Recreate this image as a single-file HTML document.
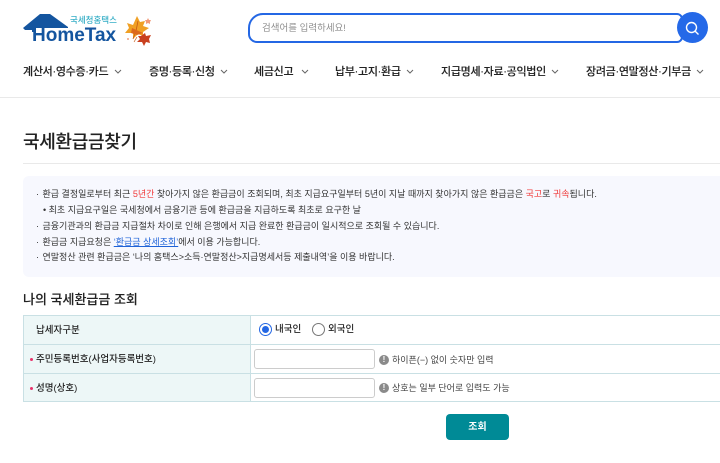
<!DOCTYPE html>
<html lang="ko"><head><meta charset="utf-8"><title>국세환급금찾기</title>
<style>
html,body{margin:0;padding:0;background:#fff;width:720px;height:463px;overflow:hidden}
body{position:relative;font-family:"Liberation Sans","Noto Sans CJK KR",sans-serif;color:#222}
.a{position:absolute;white-space:nowrap}
.nav{top:64px;font-size:11px;letter-spacing:-.3px;line-height:17px;font-weight:500;color:#222;-webkit-text-stroke:.1px #222}
.chev{position:absolute;top:69px}
.info{left:0;font-size:9px;line-height:14px;color:#333}
.th{font-size:9.5px;line-height:14px;color:#222;font-weight:500}
.r{color:#f03a3a}
.inp{position:absolute;left:254px;width:119px;height:18px;border:1px solid #ccc;border-radius:3px;background:#fff}
.ic{position:absolute;left:379px;width:10px;height:10px;border-radius:50%;background:#8a8a8a;color:#fff;font:bold 8px/10px "Liberation Sans",sans-serif;text-align:center}
.hint{left:392px;font-size:9px;line-height:14px;color:#444}
.star{left:30px;width:3px;height:3px;border-radius:50%;background:#e8336b;position:absolute}
</style></head><body>

<svg class="a" style="left:22px;top:12px" width="60" height="24" viewBox="0 0 60 24">
<path d="M1 16 L18 2 L28 2 L46 15 L46 16 L12 16 L12 20 L10 20 L10 18 L3 18 Z" fill="#14559f"/>
</svg>
<div class="a" style="left:32px;top:24px;font:bold 19px/24px 'Liberation Sans',sans-serif;color:#14559f">HomeTax</div>
<div class="a" style="left:70px;top:14px;font-size:8.5px;line-height:12px;font-weight:500;color:#35aec6">국세청홈택스</div>

<svg class="a" style="left:124px;top:15px" width="28" height="32" viewBox="0 0 28 32">
<path d="M13 1 L16 7 L21 6 L19 11 L25 13 L19 17 L19 21 L14 19 L9 24 L9 18 L1 18 L5 13 L3 8 L9 10 Z" fill="#f0a024"/>
<path d="M14 6 L12 16 L9 24" stroke="#c65a12" stroke-width=".8" fill="none"/>
<path d="M8 13 L19 18 L13 20 L7 18 Z" fill="#dc6a1c"/>
<path d="M17 21 L21 18 L22 21 L27 20 L25 24 L26 28 L22 27 L20 31 L18 27 L13 27 L16 24 L14 21 Z" fill="#c9401f"/>
<path d="M24 3 L25 5 L27 5 L26 7 L26 9 L24 8 L22 9 L22 7 L21 5 L23 5 Z" fill="#f19a78"/>
<circle cx="4" cy="24" r="1" fill="#f0a080"/>
<path d="M10 27 L13 22" stroke="#c65a12" stroke-width=".7"/>
</svg>

<div class="a" style="left:248px;top:13px;width:431px;height:26px;border:2px solid #2467e4;border-radius:15px 6px 6px 9px;background:#fff"></div>
<div class="a" style="left:262px;top:22px;font-size:9.5px;line-height:14px;color:#8f8f8f">검색어를 입력하세요!</div>
<div class="a" style="left:677px;top:12px;width:31px;height:31px;border-radius:50%;background:#2569e8"></div>
<svg class="a" style="left:684px;top:20px" width="17" height="17" viewBox="0 0 17 17"><circle cx="7.5" cy="7.5" r="5" fill="none" stroke="#fff" stroke-width="1.4"/><path d="M11.2 11.2 L14.5 14.5" stroke="#fff" stroke-width="1.4"/></svg>

<div class="a nav" style="left:23px">계산서·영수증·카드</div>
<div class="a nav" style="left:149px">증명·등록·신청</div>
<div class="a nav" style="left:254px">세금신고</div>
<div class="a nav" style="left:335px">납부·고지·환급</div>
<div class="a nav" style="left:441px">지급명세·자료·공익법인</div>
<div class="a nav" style="left:586px">장려금·연말정산·기부금</div>
<svg class="chev" style="left:114px" width="8" height="6" viewBox="0 0 8 6"><path d="M1 1 L4 4 L7 1" fill="none" stroke="#666" stroke-width="1"/></svg>
<svg class="chev" style="left:220px" width="8" height="6" viewBox="0 0 8 6"><path d="M1 1 L4 4 L7 1" fill="none" stroke="#666" stroke-width="1"/></svg>
<svg class="chev" style="left:301px" width="8" height="6" viewBox="0 0 8 6"><path d="M1 1 L4 4 L7 1" fill="none" stroke="#666" stroke-width="1"/></svg>
<svg class="chev" style="left:406px" width="8" height="6" viewBox="0 0 8 6"><path d="M1 1 L4 4 L7 1" fill="none" stroke="#666" stroke-width="1"/></svg>
<svg class="chev" style="left:551px" width="8" height="6" viewBox="0 0 8 6"><path d="M1 1 L4 4 L7 1" fill="none" stroke="#666" stroke-width="1"/></svg>
<svg class="chev" style="left:696px" width="8" height="6" viewBox="0 0 8 6"><path d="M1 1 L4 4 L7 1" fill="none" stroke="#666" stroke-width="1"/></svg>

<div class="a" style="left:0;top:97px;width:720px;height:1px;background:#e9e9e9"></div>

<div class="a" style="left:23px;top:129px;font-size:18px;letter-spacing:-.3px;line-height:26px;font-weight:500;color:#222;-webkit-text-stroke:.1px #222">국세환급금찾기</div>
<div class="a" style="left:23px;top:163px;width:697px;height:1px;background:#e9e9e9"></div>

<div class="a" style="left:23px;top:176px;width:697px;height:101px;background:#f7f8fe;border-radius:6px 0 0 6px"></div>
<div class="a info" style="left:36px;top:187px">·&nbsp;<span style="margin-left:1px">환급 결정일로부터 최근 <span class="r">5년간</span> 찾아가지 않은 환급금이 조회되며, 최초 지급요구일부터 5년이 지날 때까지 찾아가지 않은 환급금은 <span class="r">국고</span>로 <span class="r">귀속</span>됩니다.</span></div>
<div class="a info" style="left:43px;top:203px">•&nbsp;최초 지급요구일은 국세청에서 금융기관 등에 환급금을 지급하도록 최초로 요구한 날</div>
<div class="a info" style="left:36px;top:219px">·&nbsp;<span style="margin-left:1px">금융기관과의 환급금 지급절차 차이로 인해 은행에서 지급 완료한 환급금이 일시적으로 조회될 수 있습니다.</span></div>
<div class="a info" style="left:36px;top:235px">·&nbsp;<span style="margin-left:1px">환급금 지급요청은 <span style="color:#1f63d8;text-decoration:underline">‘환급금 상세조회’</span>에서 이용 가능합니다.</span></div>
<div class="a info" style="left:36px;top:250px">·&nbsp;<span style="margin-left:1px">연말정산 관련 환급금은 ‘나의 홈택스&gt;소득·연말정산&gt;지급명세서등 제출내역’을 이용 바랍니다.</span></div>

<div class="a" style="left:23px;top:291px;font-size:13px;line-height:18px;font-weight:500;color:#222;-webkit-text-stroke:.1px #222">나의 국세환급금 조회</div>

<div class="a" style="left:23px;top:315px;width:697px;height:87px;border-top:1px solid #c9e0e4;border-bottom:1px solid #c9e0e4;box-sizing:border-box;background:#fff"></div>
<div class="a" style="left:23px;top:316px;width:227px;height:85px;background:#edf7f7;border-left:1px solid #c9e0e4;box-sizing:border-box"></div>
<div class="a" style="left:250px;top:316px;width:1px;height:85px;background:#c9e0e4"></div>
<div class="a" style="left:23px;top:344px;width:697px;height:1px;background:#c9e0e4"></div>
<div class="a" style="left:23px;top:373px;width:697px;height:1px;background:#c9e0e4"></div>

<div class="a th" style="left:36px;top:324px">납세자구분</div>
<span class="star" style="top:358px"></span><div class="a th" style="left:36px;top:353px">주민등록번호(사업자등록번호)</div>
<span class="star" style="top:387px"></span><div class="a th" style="left:36px;top:382px">성명(상호)</div>

<div class="a" style="left:259px;top:323px;width:11px;height:11px;border:1px solid #2467e4;border-radius:50%;background:#fff"></div>
<div class="a" style="left:262px;top:326px;width:7px;height:7px;border-radius:50%;background:#2467e4"></div>
<div class="a" style="left:275px;top:323px;font-size:9.5px;line-height:14px;font-weight:500;color:#222">내국인</div>
<div class="a" style="left:312px;top:323px;width:11px;height:11px;border:1px solid #777;border-radius:50%;background:#fff"></div>
<div class="a" style="left:328px;top:323px;font-size:9.5px;line-height:14px;font-weight:500;color:#222">외국인</div>

<div class="inp" style="top:349px"></div>
<div class="ic" style="top:355px">!</div>
<div class="a hint" style="top:353px">하이픈(−) 없이 숫자만 입력</div>
<div class="inp" style="top:378px"></div>
<div class="ic" style="top:383px">!</div>
<div class="a hint" style="top:381px">상호는 일부 단어로 입력도 가능</div>

<div class="a" style="left:446px;top:414px;width:63px;height:26px;background:#008a96;border-radius:4px;color:#fff;font-size:10px;line-height:27px;font-weight:700;text-align:center">조회</div>

</body></html>
